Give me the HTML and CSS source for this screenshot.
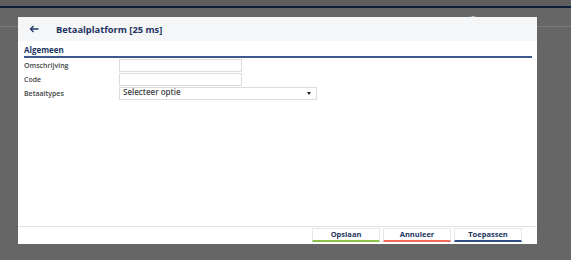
FILE: index.html
```html
<!DOCTYPE html>
<html>
<head>
<meta charset="utf-8">
<link rel="stylesheet" href="styles.css">
</head>
<body>
<div class="app">
  <div class="topbar"></div>
  <div class="subbar"><span class="sort">↓T</span></div>
</div>
<div class="modal">
  <div class="mhead">
    <svg class="back" width="10" height="8" viewBox="0 0 10 8"><path d="M9.5 4H1.5M4.5 1L1.5 4L4.5 7" fill="none" stroke="#1f3a68" stroke-width="1.3"/></svg>
    <span class="title">Betaalplatform [25 ms]</span>
  </div>
  <div class="mbody">
    <div class="section">Algemeen</div>
    <div class="row"><label>Omschrijving</label><div class="input"></div></div>
    <div class="row"><label>Code</label><div class="input"></div></div>
    <div class="row"><label>Betaaltypes</label><div class="select"><span>Selecteer optie</span><span class="caret"></span></div></div>
  </div>
  <div class="mfoot">
    <button class="btn ok">Opslaan</button>
    <button class="btn cancel">Annuleer</button>
    <button class="btn apply">Toepassen</button>
  </div>
</div>
</body>
</html>
```
FILE: styles.css
```css
html, body { margin: 0; padding: 0; }
body { background: #666666; width: 571px; height: 260px; overflow: hidden; font-family: "Open Sans", sans-serif; position: relative; }
.topbar { height: 6px; background: #5e5e5e; border-bottom: 2px solid #0c1e38; }
.subbar { height: 18px; border-bottom: 1px solid #7a7a7a; position: relative; }
.sort { position: absolute; left: 467px; top: 6px; font-size: 8px; color: #cfcfcf; line-height: 8px; }
.modal { position: absolute; left: 18px; top: 17px; width: 519px; height: 227px; background: #fff; display: flex; flex-direction: column; }
.mhead { height: 24px; background: #f5f6f8; display: flex; align-items: center; }
.back { margin-left: 11px; margin-right: 17px; }
.title { font-size: 9.3px; font-weight: 700; color: #1c3461; }
.mbody { flex: 1; padding: 4px 5px 0 6px; }
.section { font-size: 8px; font-weight: 700; color: #1c3461; line-height: 10px; padding-bottom: 1px; border-bottom: 2px solid #3e5a8c; }
.row { display: flex; align-items: center; height: 14px; }
.row label { width: 95px; font-size: 7px; font-weight: 600; color: #444; }
.input { width: 121px; height: 11px; border: 1px solid #dcdcdc; }
.select { height: 11px; border: 1px solid #dcdcdc; display: flex; align-items: center; justify-content: space-between; padding: 0 5px 0 3px; width: 188px; font-size: 8px; font-weight: 600; color: #444; }
.select span:first-child { margin-top: -3px; }
.caret { width: 0; height: 0; border-left: 2.5px solid transparent; border-right: 2.5px solid transparent; border-top: 3px solid #222; }
.mfoot { height: 16px; border-top: 1px solid #e2e2e2; display: flex; justify-content: flex-end; gap: 3px; padding: 1px 15px 0 0; }
.btn { width: 68px; height: 14px; padding: 0; margin: 0; background: #fff; border: 1px solid #e4e6ea; font-family: "Open Sans", sans-serif; font-size: 7.5px; font-weight: 700; color: #1c3461; line-height: 11px; }
.btn.ok { border-bottom: 2px solid #8bc34a; }
.btn.cancel { border-bottom: 2px solid #f06a5e; }
.btn.apply { border-bottom: 2px solid #2f4f85; }
```
